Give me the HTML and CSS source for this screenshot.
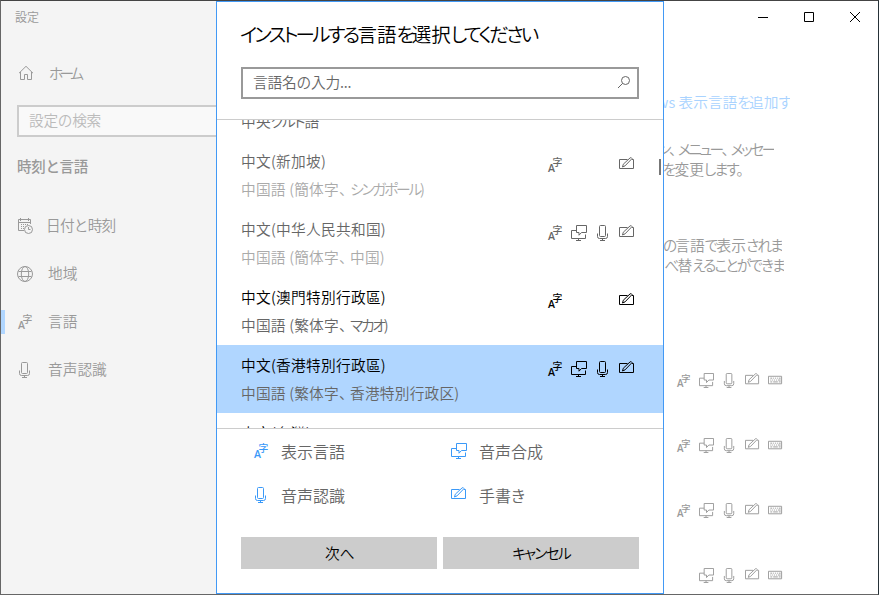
FILE: index.html
```html
<!DOCTYPE html>
<html lang="ja">
  <head>
    <meta charset="UTF-8" />
    <meta name="viewport" content="width=device-width, initial-scale=1.0" />
    <title>設定</title>
    <link rel="stylesheet" href="styles.css">
  </head>
  <body>
    <svg class="sprite">
      <symbol id="lang" viewBox="0 0 16 16">
        <text class="glyph-a" x="1" y="15.2">A</text>
        <text class="glyph-ji" x="5.6" y="9.3">字</text>
      </symbol>
      <symbol id="tts" viewBox="0 0 16 16">
        <path d="M5.5.5h10v7h-5l-2.5 2.7V7.5H5.5zM5.5 5.5h-5v8h14v-4M7.5 13.5v2M5 15.5h5" />
      </symbol>
      <symbol id="mic" viewBox="0 0 16 16">
        <path d="M5.5.5h4q1 0 1 1v9q0 1-1 1h-4q-1 0-1-1v-9q0-1 1-1zM2.5 8.5v3q0 2 2 2h6q2 0 2-2v-3M7.5 13.5v2M5 15.5h5" />
      </symbol>
      <symbol id="pen" viewBox="0 0 16 16">
        <path d="M8.5 2.5h-8v9h14v-9h-1.5M3.5 10l.8-2.8L11.2.8q1.2-.6 1.8.8L6 8.9z" />
      </symbol>
      <symbol id="keyboard" viewBox="0 0 16 16">
        <path d="M.5 3.5h14v8H.5zM2.5 5.5h2M5.5 5.5h1M7.5 5.5h1M9.5 5.5h1M11.5 5.5h2M2.5 7.5h1M4.5 7.5h1M6.5 7.5h1M8.5 7.5h1M10.5 7.5h3M2.5 9.5h2M5.5 9.5h5M11.5 9.5h2" />
      </symbol>
      <symbol id="home" viewBox="0 0 16 16">
        <path d="M1 8.2L8 1.3l7 6.9M2.5 7v7.5h4v-5h3v5h4V7" />
      </symbol>
      <symbol id="date" viewBox="0 0 16 16">
        <path d="M7 12.5H1.5v-11h12V6M1.5 4.5h12M3.5 0v3M11.5 0v3M4 6.5h1M6 6.5h1M8 6.5h1M10 6.5h1M4 8.5h1M6 8.5h1M4 10.5h1M6 10.5h1M11.5 9v2.5h2" />
        <circle cx="11.5" cy="11.5" r="4" />
      </symbol>
      <symbol id="globe" viewBox="0 0 16 16">
        <circle cx="8" cy="8" r="7.5" />
        <ellipse cx="8" cy="8" rx="3.7" ry="7.5" />
        <path d="M1.5 5.5h13M1.5 10.5h13" />
      </symbol>
      <symbol id="search" viewBox="0 0 16 16">
        <circle cx="9.5" cy="5.5" r="4" />
        <path d="M6.6 8.4L2 13" />
      </symbol>
    </svg>

    <div class="window">
      <nav class="sidebar">
        <div class="app-name">設定</div>
        <div class="nav-item home"><svg class="icon"><use href="#home" /></svg><span class="kana">ホーム</span></div>
        <div class="nav-search">設定の検索</div>
        <h2>時刻と言語</h2>
        <div class="nav-item date"><svg class="icon"><use href="#date" /></svg><span>日付と時刻</span></div>
        <div class="nav-item"><svg class="icon"><use href="#globe" /></svg><span>地域</span></div>
        <div class="nav-item active"><svg class="icon"><use href="#lang" /></svg><span>言語</span></div>
        <div class="nav-item"><svg class="icon"><use href="#mic" /></svg><span>音声認識</span></div>
      </nav>

      <section class="dialog">
        <header>
          <h1><span class="kana">インストールする</span>言語<span class="kana">を</span>選択<span class="kana">してください</span></h1>
          <div class="search-box"><span>言語名の入力...</span><svg class="icon"><use href="#search" /></svg></div>
        </header>

        <div class="list-wrap">
          <div class="list">
            <div class="row dim partial">
              <div class="sub">中央<span class="kana">クルド</span>語</div>
            </div>
            <div class="row dim">
              <div><div class="name" lang="zh-CN">中文(新加坡)</div><div class="sub">中国語 (簡体字<span class="comma">、</span><span class="kana">シンガポール</span>)</div></div>
              <div class="features"><svg class="icon"><use href="#lang" /></svg><i></i><i></i><svg class="icon"><use href="#pen" /></svg></div>
            </div>
            <div class="row dim">
              <div><div class="name" lang="zh-CN">中文(中华人民共和国)</div><div class="sub">中国語 (簡体字<span class="comma">、</span>中国)</div></div>
              <div class="features"><svg class="icon"><use href="#lang" /></svg><svg class="icon"><use href="#tts" /></svg><svg class="icon"><use href="#mic" /></svg><svg class="icon"><use href="#pen" /></svg></div>
            </div>
            <div class="row">
              <div><div class="name" lang="zh-TW">中文(澳門特別行政區)</div><div class="sub">中国語 (繁体字<span class="comma">、</span><span class="kana">マカオ</span>)</div></div>
              <div class="features"><svg class="icon"><use href="#lang" /></svg><i></i><i></i><svg class="icon"><use href="#pen" /></svg></div>
            </div>
            <div class="row selected">
              <div><div class="name" lang="zh-TW">中文(香港特別行政區)</div><div class="sub">中国語 (繁体字<span class="comma">、</span>香港特別行政区)</div></div>
              <div class="features"><svg class="icon"><use href="#lang" /></svg><svg class="icon"><use href="#tts" /></svg><svg class="icon"><use href="#mic" /></svg><svg class="icon"><use href="#pen" /></svg></div>
            </div>
            <div class="row">
              <div class="name" lang="zh-TW">中文(台灣)</div>
            </div>
          </div>
          <div class="scrollbar"></div>
        </div>

        <footer>
          <div class="legend">
            <div><svg class="icon"><use href="#lang" /></svg><span>表示言語</span></div>
            <div><svg class="icon"><use href="#tts" /></svg><span>音声合成</span></div>
            <div><svg class="icon"><use href="#mic" /></svg><span>音声認識</span></div>
            <div><svg class="icon"><use href="#pen" /></svg><span>手書<span class="kana">き</span></span></div>
          </div>
          <div class="buttons">
            <button type="button">次<span class="kana">へ</span></button>
            <button type="button"><span class="kana">キャンセル</span></button>
          </div>
        </footer>
      </section>

      <main>
        <div class="controls">
          <svg class="control" viewBox="0 0 10 10"><path d="M0 5.5h10" /></svg>
          <svg class="control" viewBox="0 0 10 10"><path d="M.5.5h9v9h-9z" /></svg>
          <svg class="control" viewBox="0 0 10 10"><path d="M0 0l10 10M10 0L0 10" /></svg>
        </div>
        <div class="cut link"><span>ws 表示言語<span class="kana">を</span>追加<span class="kana">す</span></span></div>
        <div class="cut menu"><span class="kana">ン<span class="mark">、</span>メニュー<span class="mark">、</span>メッセー</span></div>
        <div class="cut change"><span><span class="kana">を</span>変更<span class="kana">します。</span></span></div>
        <div class="cut shown"><span><span class="kana">の</span>言語<span class="kana">で</span>表示<span class="kana">されま</span></span></div>
        <div class="cut sort"><span>並<span class="kana">べ</span>替<span class="kana">えることができま</span></span></div>
        <div class="installed">
          <div class="features"><svg class="icon"><use href="#lang" /></svg><svg class="icon"><use href="#tts" /></svg><svg class="icon"><use href="#mic" /></svg><svg class="icon"><use href="#pen" /></svg><svg class="icon"><use href="#keyboard" /></svg></div>
          <div class="features"><svg class="icon"><use href="#lang" /></svg><svg class="icon"><use href="#tts" /></svg><svg class="icon"><use href="#mic" /></svg><svg class="icon"><use href="#pen" /></svg><svg class="icon"><use href="#keyboard" /></svg></div>
          <div class="features"><svg class="icon"><use href="#lang" /></svg><svg class="icon"><use href="#tts" /></svg><svg class="icon"><use href="#mic" /></svg><svg class="icon"><use href="#pen" /></svg><svg class="icon"><use href="#keyboard" /></svg></div>
          <div class="features"><i></i><svg class="icon"><use href="#tts" /></svg><svg class="icon"><use href="#mic" /></svg><svg class="icon"><use href="#pen" /></svg><svg class="icon"><use href="#keyboard" /></svg></div>
        </div>
      </main>
    </div>
  </body>
</html>
```
FILE: styles.css
```css
* {
  box-sizing: border-box;
}
body {
  margin: 0;
  font-family: "Noto Sans CJK JP", sans-serif;
  font-size: 14.7px;
  font-weight: 350;
  line-height: 20px;
  overflow: hidden;
}
[lang="zh-CN"] {
  font-family: "Noto Sans CJK SC", sans-serif;
}
[lang="zh-TW"] {
  font-family: "Noto Sans CJK TC", sans-serif;
}
.sprite {
  display: none;
}
.icon {
  width: 16px;
  height: 16px;
  flex: none;
  fill: none;
  stroke: currentColor;
  stroke-width: 1;
}
.glyph-a,
.glyph-ji {
  fill: currentColor;
  stroke: none;
}
.glyph-a {
  font: 600 10.5px "Open Sans", sans-serif;
}
.glyph-ji {
  font: 500 9.8px "Noto Sans CJK JP", sans-serif;
}
.kana {
  font-feature-settings: "palt";
  letter-spacing: -0.12em;
}
.comma {
  letter-spacing: -3.5px;
}
.mark {
  letter-spacing: 0.1em;
}

.window {
  display: flex;
  width: 879px;
  height: 595px;
  border: 1px solid #666;
  border-top-color: #444;
  border-right-color: #263238;
  background: #fff;
  overflow: hidden;
}

/* left navigation */
.sidebar {
  width: 215px;
  background: #f4f4f4;
  color: #999;
}
.app-name {
  padding: 6px 0 0 14px;
  font-size: 12px;
}
.nav-item {
  display: flex;
  align-items: center;
  gap: 15px;
  height: 48px;
  padding-left: 16px;
}
.nav-item span {
  padding-bottom: 2px;
}
.home {
  margin-top: 22px;
  padding-left: 17px;
}
.nav-item .kana {
  padding-bottom: 0;
  letter-spacing: -0.24em;
}
.nav-search {
  height: 32px;
  margin: 8px 0 0 16px;
  padding: 3px 10px;
  border: 2px solid #ccc;
  border-right: none;
  background: #f9f9f9;
  color: #bbb;
  letter-spacing: -0.3px;
}
.sidebar h2 {
  margin: 19px 0 26px 16px;
  font-size: 14.5px;
  font-weight: 500;
  letter-spacing: -0.3px;
}
.date {
  gap: 13px;
  letter-spacing: -0.8px;
}
.active {
  padding-left: 0;
}
.active::before {
  content: "";
  width: 4px;
  height: 24px;
  margin-right: -3px;
  background: #b0d6ff;
}

/* language picker */
.dialog {
  display: flex;
  flex-direction: column;
  width: 448px;
  border: 1px solid #4299f5;
  color: #000;
}
.dialog header {
  height: 118px;
  padding: 17px 24px 0;
  border-bottom: 1px solid #ccc;
}
.dialog h1 {
  margin: 0 0 0 -1px;
  font-size: 19.5px;
  font-weight: 350;
  line-height: 30px;
}
.dialog h1 .kana {
  letter-spacing: -0.14em;
}
.search-box {
  display: flex;
  align-items: center;
  justify-content: space-between;
  height: 32px;
  margin-top: 18px;
  padding: 0 5px 0 10px;
  border: 2px solid #999;
  color: #666;
  letter-spacing: -0.2px;
}
.search-box span {
  padding-bottom: 2px;
}
.list-wrap {
  position: relative;
  height: 309px;
  border-bottom: 1px solid #ccc;
  overflow: hidden;
}
.list {
  margin-top: -47px;
}
.row {
  display: flex;
  justify-content: space-between;
  height: 68px;
  padding: 10px 28px 0 24px;
}
.partial {
  padding-top: 38px;
}
.name {
  letter-spacing: 0.28px;
}
.sub {
  margin-top: 8px;
  color: #666;
  letter-spacing: 0.2px;
}
.sub .kana {
  letter-spacing: -0.15em;
}
.dim {
  color: #666;
}
.dim .sub {
  color: #aaa;
}
.partial .sub {
  margin: 0;
  color: #666;
}
.partial .kana {
  letter-spacing: -0.1em;
}
.selected {
  background: #b0d6ff;
}
.features {
  display: flex;
  gap: 8px;
  padding-top: 6px;
}
.features i {
  width: 16px;
}
.scrollbar {
  position: absolute;
  top: 39px;
  right: 2px;
  width: 2px;
  height: 16px;
  background: #777;
}
.legend {
  display: grid;
  grid-template-columns: 198px 1fr;
  grid-auto-rows: 44px;
  padding-left: 36px;
  font-size: 16px;
  color: #666;
}
.legend div {
  display: flex;
  align-items: center;
  gap: 12px;
}
.legend .icon {
  color: #3a99f8;
}
.buttons {
  display: flex;
  gap: 6px;
  padding: 20px 24px;
}
.buttons button {
  flex: 1;
  height: 32px;
  padding: 0;
  border: none;
  background: #ccc;
  color: #000;
  font: inherit;
}

/* page behind the picker */
main {
  width: 214px;
  color: #999;
}
.controls {
  display: flex;
  justify-content: flex-end;
  gap: 36px;
  padding: 11px 18px 0 0;
}
.control {
  width: 10px;
  height: 10px;
  fill: none;
  stroke: #000;
}
.cut {
  display: flex;
  justify-content: flex-end;
  align-items: center;
  width: 110px;
  height: 20px;
  white-space: nowrap;
  overflow: hidden;
}
.link {
  width: 126px;
  height: 13px;
  margin-top: 74px;
  padding-bottom: 2px;
  color: #a9d3ff;
}
.menu {
  margin-top: 30px;
}
.menu .kana {
  letter-spacing: -0.16em;
}
.menu .mark {
  letter-spacing: 0.1em;
}
.change {
  width: 78px;
}
.shown {
  width: 118px;
  margin-top: 56px;
}
.sort {
  width: 120px;
}
.installed {
  padding: 92px 0 0 12px;
}
.installed .features {
  height: 65px;
}
.installed .icon,
.installed i {
  width: 15px;
  height: 15px;
}
```
